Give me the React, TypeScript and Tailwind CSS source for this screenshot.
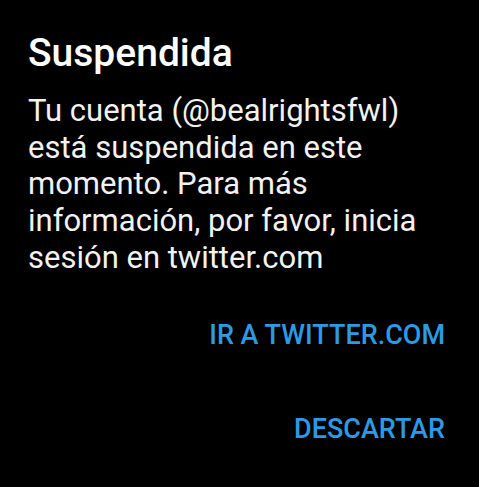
export default function App() {
  return (
    <div className="w-[479px] h-[487px] bg-black text-white overflow-hidden" style={{ fontFamily: 'Roboto, "Liberation Sans", sans-serif' }}>
      <div className="pl-[28px] pr-[24px] pt-[30px]">
        <h1 className="text-[39px] leading-[46px] font-medium">Suspendida</h1>
        <p className="mt-[17px] text-[31px] leading-[36.7px] text-[#f2f2f2]">
          Tu cuenta (@bealrightsfwl) está suspendida en este momento. Para más información, por favor, inicia sesión en twitter.com
        </p>
      </div>
      <div className="flex flex-col items-end pr-[34px] mt-[42px] text-[#2b9be6] font-medium text-[27px] leading-[32px]">
        <button className="uppercase">Ir a twitter.com</button>
        <button className="uppercase mt-[62px]">Descartar</button>
      </div>
    </div>
  );
}
